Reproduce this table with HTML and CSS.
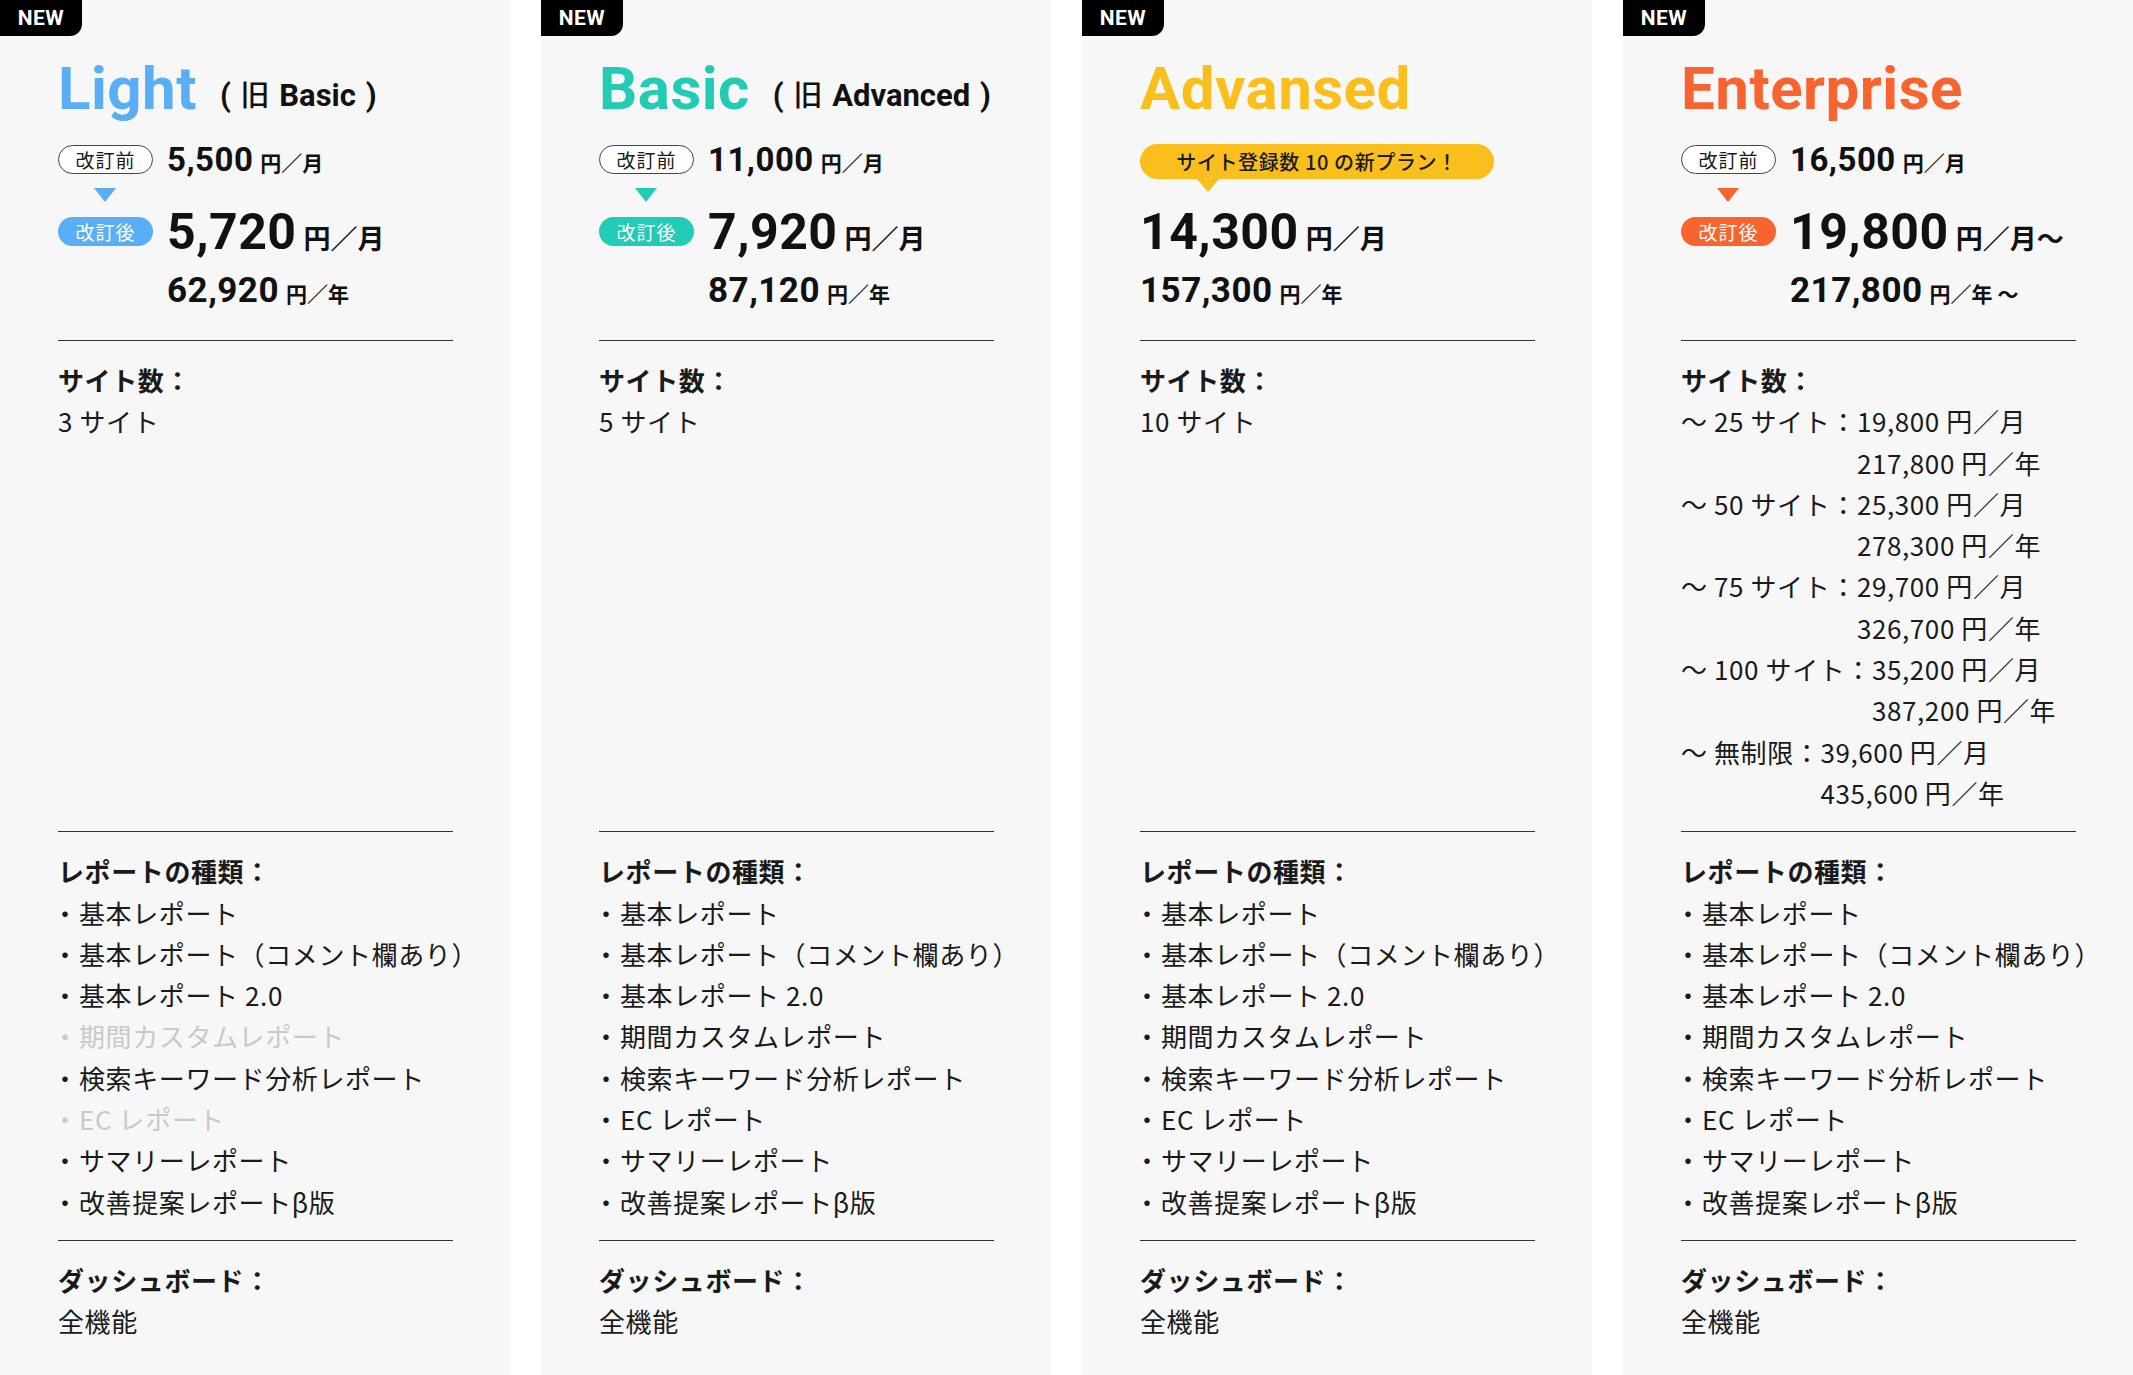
FILE: index.html
```html
<!DOCTYPE html>
<html lang="ja">
<head>
<meta charset="utf-8">
<title>Plans</title>
<link rel="stylesheet" href="styles.css">
</head>
<body>
<div class="plans">

  <section class="card card-light">
    <span class="badge-new">NEW</span>
    <div class="head">
      <h2 class="title"><span class="name">Light</span><span class="old">( <span class="kyu">旧</span> Basic )</span></h2>
      <div class="row row-a"><span class="pill pill-before">改訂前</span><span class="price price-sm">5,500<span class="unit">円／月</span></span></div>
      <div class="arrow-row"><span class="arrow"></span></div>
      <div class="row row-b"><span class="pill pill-after">改訂後</span><span class="price price-lg">5,720<span class="unit">円／月</span></span></div>
      <div class="row row-c indent"><span class="price price-md">62,920<span class="unit">円／年</span></span></div>
    </div>
    <div class="sec sec-sites">
      <p class="label">サイト数：</p>
      <p>3 サイト</p>
    </div>
    <div class="sec">
      <p class="label">レポートの種類：</p>
      <ul class="reports">
        <li><span class="dot">・</span>基本レポート</li>
        <li><span class="dot">・</span>基本レポート（コメント欄あり）</li>
        <li><span class="dot">・</span>基本レポート 2.0</li>
        <li class="off"><span class="dot">・</span>期間カスタムレポート</li>
        <li><span class="dot">・</span>検索キーワード分析レポート</li>
        <li class="off"><span class="dot">・</span>EC レポート</li>
        <li><span class="dot">・</span>サマリーレポート</li>
        <li><span class="dot">・</span>改善提案レポートβ版</li>
      </ul>
    </div>
    <div class="sec">
      <p class="label">ダッシュボード：</p>
      <p>全機能</p>
    </div>
  </section>

  <section class="card card-basic">
    <span class="badge-new">NEW</span>
    <div class="head">
      <h2 class="title"><span class="name">Basic</span><span class="old">( <span class="kyu">旧</span> Advanced )</span></h2>
      <div class="row row-a"><span class="pill pill-before">改訂前</span><span class="price price-sm">11,000<span class="unit">円／月</span></span></div>
      <div class="arrow-row"><span class="arrow"></span></div>
      <div class="row row-b"><span class="pill pill-after">改訂後</span><span class="price price-lg">7,920<span class="unit">円／月</span></span></div>
      <div class="row row-c indent"><span class="price price-md">87,120<span class="unit">円／年</span></span></div>
    </div>
    <div class="sec sec-sites">
      <p class="label">サイト数：</p>
      <p>5 サイト</p>
    </div>
    <div class="sec">
      <p class="label">レポートの種類：</p>
      <ul class="reports">
        <li><span class="dot">・</span>基本レポート</li>
        <li><span class="dot">・</span>基本レポート（コメント欄あり）</li>
        <li><span class="dot">・</span>基本レポート 2.0</li>
        <li><span class="dot">・</span>期間カスタムレポート</li>
        <li><span class="dot">・</span>検索キーワード分析レポート</li>
        <li><span class="dot">・</span>EC レポート</li>
        <li><span class="dot">・</span>サマリーレポート</li>
        <li><span class="dot">・</span>改善提案レポートβ版</li>
      </ul>
    </div>
    <div class="sec">
      <p class="label">ダッシュボード：</p>
      <p>全機能</p>
    </div>
  </section>

  <section class="card card-adv">
    <span class="badge-new">NEW</span>
    <div class="head">
      <h2 class="title"><span class="name">Advansed</span></h2>
      <div class="row row-a"><span class="bubble">サイト登録数 10 の新プラン！</span></div>
      <div class="arrow-row"></div>
      <div class="row row-b"><span class="price price-lg">14,300<span class="unit">円／月</span></span></div>
      <div class="row row-c"><span class="price price-md">157,300<span class="unit">円／年</span></span></div>
    </div>
    <div class="sec sec-sites">
      <p class="label">サイト数：</p>
      <p>10 サイト</p>
    </div>
    <div class="sec">
      <p class="label">レポートの種類：</p>
      <ul class="reports">
        <li><span class="dot">・</span>基本レポート</li>
        <li><span class="dot">・</span>基本レポート（コメント欄あり）</li>
        <li><span class="dot">・</span>基本レポート 2.0</li>
        <li><span class="dot">・</span>期間カスタムレポート</li>
        <li><span class="dot">・</span>検索キーワード分析レポート</li>
        <li><span class="dot">・</span>EC レポート</li>
        <li><span class="dot">・</span>サマリーレポート</li>
        <li><span class="dot">・</span>改善提案レポートβ版</li>
      </ul>
    </div>
    <div class="sec">
      <p class="label">ダッシュボード：</p>
      <p>全機能</p>
    </div>
  </section>

  <section class="card card-ent">
    <span class="badge-new">NEW</span>
    <div class="head">
      <h2 class="title"><span class="name">Enterprise</span></h2>
      <div class="row row-a"><span class="pill pill-before">改訂前</span><span class="price price-sm">16,500<span class="unit">円／月</span></span></div>
      <div class="arrow-row"><span class="arrow"></span></div>
      <div class="row row-b"><span class="pill pill-after">改訂後</span><span class="price price-lg">19,800<span class="unit">円／月～</span></span></div>
      <div class="row row-c indent"><span class="price price-md">217,800<span class="unit">円／年 ～</span></span></div>
    </div>
    <div class="sec sec-sites">
      <p class="label">サイト数：</p>
      <div class="tier"><span>～ 25 サイト：</span><span>19,800 円／月<br>217,800 円／年</span></div>
      <div class="tier"><span>～ 50 サイト：</span><span>25,300 円／月<br>278,300 円／年</span></div>
      <div class="tier"><span>～ 75 サイト：</span><span>29,700 円／月<br>326,700 円／年</span></div>
      <div class="tier"><span>～ 100 サイト：</span><span>35,200 円／月<br>387,200 円／年</span></div>
      <div class="tier"><span>～ 無制限：</span><span>39,600 円／月<br>435,600 円／年</span></div>
    </div>
    <div class="sec">
      <p class="label">レポートの種類：</p>
      <ul class="reports">
        <li><span class="dot">・</span>基本レポート</li>
        <li><span class="dot">・</span>基本レポート（コメント欄あり）</li>
        <li><span class="dot">・</span>基本レポート 2.0</li>
        <li><span class="dot">・</span>期間カスタムレポート</li>
        <li><span class="dot">・</span>検索キーワード分析レポート</li>
        <li><span class="dot">・</span>EC レポート</li>
        <li><span class="dot">・</span>サマリーレポート</li>
        <li><span class="dot">・</span>改善提案レポートβ版</li>
      </ul>
    </div>
    <div class="sec">
      <p class="label">ダッシュボード：</p>
      <p>全機能</p>
    </div>
  </section>

</div>
</body>
</html>
```

FILE: styles.css
```css
* { box-sizing: border-box; margin: 0; padding: 0; }

body {
  margin: 0;
  background: #ffffff;
  font-family: "Noto Sans CJK JP", "Noto Sans", sans-serif;
  color: #1a1a1a;
}

.plans {
  display: grid;
  grid-template-columns: repeat(4, minmax(0, 1fr));
  column-gap: 31px;
}

.card {
  position: relative;
  background: #f7f7f7;
  display: flex;
  flex-direction: column;
  padding: 0 57px 15px 58px;
  min-width: 0;
}

.card-light { --c: #5aaef3; }
.card-basic { --c: #22cbb4; }
.card-adv   { --c: #fbbf1d; }
.card-ent   { --c: #f8642f; }

.badge-new {
  position: absolute;
  top: 0;
  left: 0;
  width: 82px;
  height: 36px;
  background: #000;
  color: #fff;
  border-radius: 0 0 12px 0;
  font: 700 21px/36px Roboto, "Noto Sans", sans-serif;
  text-align: center;
  letter-spacing: 0.5px;
}

.head {
  padding: 59px 0 32px;
}

.title {
  display: flex;
  align-items: baseline;
  height: 60px;
  white-space: nowrap;
}

.name {
  font: 700 60px/60px Roboto, "Noto Sans", sans-serif;
  color: var(--c);
  letter-spacing: 0.5px;
}

.old {
  align-self: flex-end;
  margin: 0 0 8px 23px;
  font-family: Roboto, "Noto Sans CJK JP", sans-serif;
  font-size: 31px;
  font-weight: 700;
  line-height: 1;
  color: #111;
  word-spacing: 2px;
}

.kyu {
  font-family: "Noto Sans CJK JP", sans-serif;
  font-weight: 500;
  font-size: 29px;
}

.row {
  display: flex;
  align-items: center;
  white-space: nowrap;
}

.row-a { margin-top: 24px; height: 33px; }
.row-b { height: 50px; }
.row-c { margin-top: 16.5px; height: 35px; }
.indent { padding-left: 109px; }

.arrow-row {
  height: 14px;
  margin: 12px 0 4.5px;
  padding-left: 36px;
}

.arrow {
  display: block;
  width: 0;
  height: 0;
  border-left: 11.5px solid transparent;
  border-right: 11.5px solid transparent;
  border-top: 14px solid var(--c);
}

.pill {
  flex: none;
  width: 95px;
  height: 29px;
  margin-right: 14px;
  border-radius: 15px;
  display: flex;
  align-items: center;
  justify-content: center;
  font-size: 19px;
  letter-spacing: 1px;
  line-height: 1;
}

.pill-before {
  background: #ffffff;
  border: 1px solid #444;
  color: #1a1a1a;
}

.pill-after {
  background: var(--c);
  color: #ffffff;
}

.price {
  font-family: Roboto, "Noto Sans", sans-serif;
  font-weight: 700;
  line-height: 1;
  color: #111;
  letter-spacing: 0.5px;
}

.price-sm { font-size: 33px; }
.price-lg { font-size: 50px; }
.price-md { font-size: 35px; }

.unit {
  font-family: "Noto Sans CJK JP", sans-serif;
  font-weight: 700;
  margin-left: 7px;
  letter-spacing: 0;
}

.price-sm .unit { font-size: 21px; }
.price-lg .unit { font-size: 27px; }
.price-md .unit { font-size: 21px; }

.bubble {
  position: relative;
  width: 354px;
  height: 35px;
  margin-top: 3px;
  border-radius: 18px;
  background: var(--c);
  display: flex;
  align-items: center;
  justify-content: center;
  font-size: 20px;
  font-weight: 500;
  letter-spacing: 0.6px;
  color: #1a1a1a;
}

.bubble::after {
  content: "";
  position: absolute;
  left: 56.5px;
  top: 100%;
  border-left: 11.5px solid transparent;
  border-right: 11.5px solid transparent;
  border-top: 13px solid var(--c);
}

.sec {
  border-top: 1px solid #333;
  padding: 18px 0;
  font-size: 26px;
  letter-spacing: 0.6px;
  line-height: 41.3px;
}

.sec-sites { flex: 1; }

.label { font-weight: 700; }

.reports { list-style: none; }
.reports li { white-space: nowrap; }
.reports li.off { color: #c9c9c9; }

.dot {
  display: inline-block;
  width: 27px;
  margin-left: -6px;
  letter-spacing: 0;
}

.tier {
  display: flex;
  white-space: nowrap;
}
```
